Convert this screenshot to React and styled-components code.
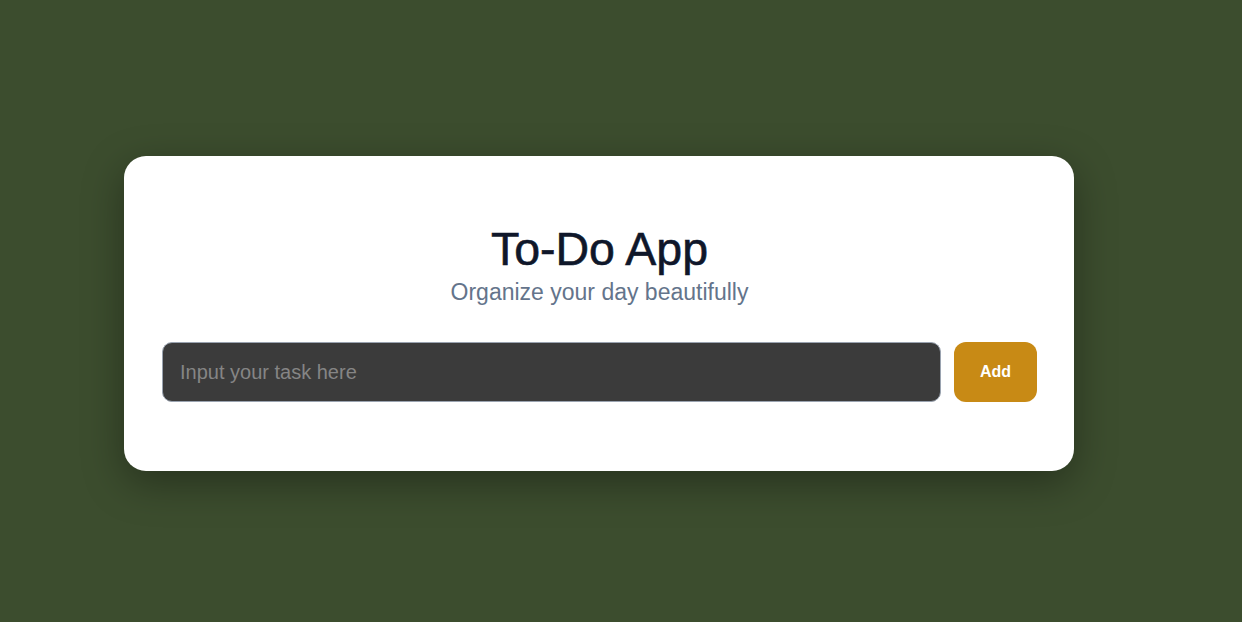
import React, { useState } from "react";
import styled, { createGlobalStyle } from "styled-components";

const GlobalStyle = createGlobalStyle`
  * { box-sizing: border-box; }
  html, body {
    margin: 0;
    padding: 0;
    background: #3c4d2e;
    font-family: "Liberation Sans", Arial, sans-serif;
  }
`;

const Page = styled.div`
  min-height: 622px;
  display: flex;
  align-items: center;
  justify-content: center;
  padding: 5px 44px 0 0;
`;

const Card = styled.div`
  width: 950px;
  background: #fff;
  border-radius: 22px;
  padding: 67px 37px 69px 38px;
  box-shadow: 0 12px 40px rgba(0, 0, 0, 0.35);
`;

const Header = styled.div`
  text-align: center;
  margin-bottom: 37px;
`;

const Title = styled.h1`
  margin: 0;
  font-size: 46.5px;
  font-weight: 400;
  letter-spacing: 0;
  line-height: 52px;
  color: #0f172a;
  -webkit-text-stroke: 0.6px #0f172a;
`;

const Subtitle = styled.p`
  margin: 5px 0 0;
  font-size: 23px;
  line-height: 25px;
  color: #64748b;
`;

const Row = styled.form`
  display: flex;
  gap: 13px;
`;

const TaskInput = styled.input`
  flex: 1;
  height: 60px;
  padding: 0 17px;
  border: 1px solid #9aa3b0;
  border-radius: 10px;
  background: #3b3b3b;
  color: #fff;
  font-family: inherit;
  font-size: 20px;
  outline: none;

  &::placeholder {
    color: #858585;
  }
`;

const AddButton = styled.button`
  width: 83px;
  height: 60px;
  border: none;
  border-radius: 12px;
  background: #c88a15;
  color: #fff;
  font-family: inherit;
  font-size: 16px;
  font-weight: 700;
  cursor: pointer;
`;

export default function App() {
  const [task, setTask] = useState("");

  return (
    <>
      <GlobalStyle />
      <Page>
        <Card>
          <Header>
            <Title>To-Do App</Title>
            <Subtitle>Organize your day beautifully</Subtitle>
          </Header>
          <Row onSubmit={(e) => e.preventDefault()}>
            <TaskInput
              value={task}
              onChange={(e) => setTask(e.target.value)}
              placeholder="Input your task here"
            />
            <AddButton type="submit">Add</AddButton>
          </Row>
        </Card>
      </Page>
    </>
  );
}
